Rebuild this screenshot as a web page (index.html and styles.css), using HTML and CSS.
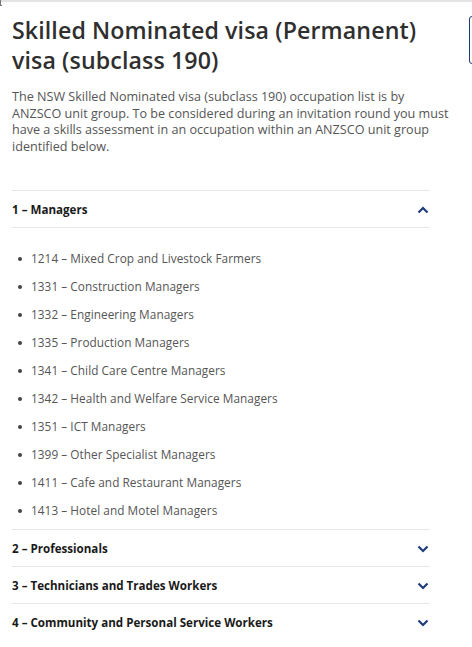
FILE: index.html
```html
<!DOCTYPE html>
<html>
<head>
<meta charset="utf-8">
<link rel="stylesheet" href="styles.css">
</head>
<body>
<div class="topline"></div>
<div class="corner"></div>
<div class="sidebox"></div>
<main class="content">
  <h1 class="title">Skilled Nominated visa (Permanent) visa (subclass 190)</h1>
  <p class="intro">The NSW Skilled Nominated visa (subclass 190) occupation list is by ANZSCO unit group. To be considered during an invitation round you must have a skills assessment in an occupation within an ANZSCO unit group identified below.</p>
  <div class="accordion">
    <div class="acc-item">
      <div class="acc-head"><span>1 – Managers</span>
        <svg class="chev" width="12" height="8" viewBox="0 0 12 8"><path d="M1.5 6.5 L6 2 L10.5 6.5" fill="none" stroke="#1d3c78" stroke-width="2.2"/></svg>
      </div>
      <ul class="acc-list">
        <li>1214 – Mixed Crop and Livestock Farmers</li>
        <li>1331 – Construction Managers</li>
        <li>1332 – Engineering Managers</li>
        <li>1335 – Production Managers</li>
        <li>1341 – Child Care Centre Managers</li>
        <li>1342 – Health and Welfare Service Managers</li>
        <li>1351 – ICT Managers</li>
        <li>1399 – Other Specialist Managers</li>
        <li>1411 – Cafe and Restaurant Managers</li>
        <li>1413 – Hotel and Motel Managers</li>
      </ul>
    </div>
    <div class="acc-item">
      <div class="acc-head"><span>2 – Professionals</span>
        <svg class="chev" width="12" height="8" viewBox="0 0 12 8"><path d="M1.5 1.5 L6 6 L10.5 1.5" fill="none" stroke="#1d3c78" stroke-width="2.2"/></svg>
      </div>
    </div>
    <div class="acc-item">
      <div class="acc-head"><span>3 – Technicians and Trades Workers</span>
        <svg class="chev" width="12" height="8" viewBox="0 0 12 8"><path d="M1.5 1.5 L6 6 L10.5 1.5" fill="none" stroke="#1d3c78" stroke-width="2.2"/></svg>
      </div>
    </div>
    <div class="acc-item">
      <div class="acc-head"><span>4 – Community and Personal Service Workers</span>
        <svg class="chev" width="12" height="8" viewBox="0 0 12 8"><path d="M1.5 1.5 L6 6 L10.5 1.5" fill="none" stroke="#1d3c78" stroke-width="2.2"/></svg>
      </div>
    </div>
  </div>
</main>
</body>
</html>
```
FILE: styles.css
```css
* { box-sizing: border-box; }
html, body { margin: 0; padding: 0; background: #fff; }
body { font-family: "Open Sans", "Liberation Sans", sans-serif; color: #333; position: relative; overflow: hidden; height: 647px; }
.topline { height: 2px; background: #e4e4e4; }
.corner { position: absolute; left: 0; top: 0; width: 2px; height: 6px; border-left: 1px solid #777; border-bottom: 1px solid #777; }
.sidebox { position: absolute; left: 469px; top: 16px; width: 20px; height: 48px; border: 1.5px solid #1d3c78; border-radius: 3px; }
.content { padding: 13px 42px 0 12px; }
.title { margin: 0 -20px 0 0; font-size: 23.2px; line-height: 30px; font-weight: 600; color: #2f2f2f; letter-spacing: 0.1px; }
.intro { margin: 14px -20px 0 0; font-size: 12.6px; line-height: 16.6px; color: #555; }
.accordion { margin-top: 35px; }
.acc-item { border-top: 1px solid #e6e6e6; }
.acc-head { display: flex; justify-content: space-between; align-items: center; height: 36px; font-size: 11.6px; font-weight: 700; color: #1a1a1a; padding-right: 1px; }
.acc-head .chev { margin-top: 1px; }
.acc-list { margin: 0; border-top: 1px solid #e6e6e6; padding: 19px 0 2px 19px; list-style: none; }
.acc-list li { position: relative; height: 28px; font-size: 11.8px; color: #555; line-height: 22px; letter-spacing: 0.05px; }
.acc-list li::before { content: ""; position: absolute; left: -13px; top: 10px; width: 4px; height: 4px; border-radius: 50%; background: #444; }
```
